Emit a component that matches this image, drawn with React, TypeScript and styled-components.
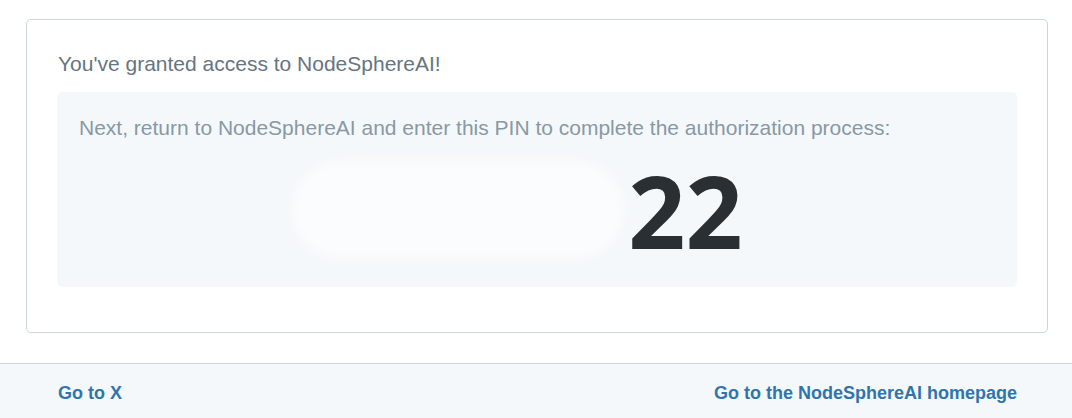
import React, { FC } from 'react'
import styled, { createGlobalStyle } from 'styled-components'

const GlobalStyle = createGlobalStyle`
  html, body {
    margin: 0;
    padding: 0;
    background: #ffffff;
    font-family: "Liberation Sans", Arial, sans-serif;
  }
`;

const Page = styled.div`
  display: flex;
  flex-direction: column;
  min-height: 418px;
`;

const Card = styled.div`
  margin: 19px 24px 30px 26px;
  padding: 30px 30px 45px 30px;
  border: 1px solid #ccd6dd;
  border-radius: 5px;
  background: #ffffff;
`;

const Heading = styled.h2`
  margin: 0 0 14px 1px;
  font-size: 21px;
  line-height: 28px;
  font-weight: normal;
  color: #66757f;
`;

const PinBox = styled.div`
  background: #f5f8fa;
  border-radius: 5px;
  padding: 22px 22px 27px 22px;
`;

const Instructions = styled.p`
  margin: 0 0 18px 0;
  font-size: 21px;
  line-height: 28px;
  color: #8899a6;
`;

const Pin = styled.div`
  display: flex;
  justify-content: center;
  align-items: center;
  padding-right: 38px;
  font-family: "Open Sans", "DejaVu Sans", sans-serif;
  font-weight: 700;
  font-size: 100px;
  line-height: 100px;
  color: #292f33;
`;

const Hidden = styled.span`
  width: 330px;
  height: 96px;
  margin: 0 5px 0 0;
  border-radius: 48px;
  background: rgba(255, 255, 255, 0.6);
  filter: blur(6px);
`;

const Footer = styled.div`
  flex: 1;
  display: flex;
  justify-content: space-between;
  align-items: flex-start;
  border-top: 1px solid #ccd6dd;
  background: #f5f8fa;
  padding: 18px 55px 14px 58px;
`;

const Link = styled.a`
  font-size: 18px;
  line-height: 22px;
  font-weight: bold;
  color: #2f75ac;
  text-decoration: none;
`;

const App: FC = () => {
    return (
        <>
            <GlobalStyle />
            <Page>
                <Card>
                    <Heading>You've granted access to NodeSphereAI!</Heading>
                    <PinBox>
                        <Instructions>
                            Next, return to NodeSphereAI and enter this PIN to complete the authorization process:
                        </Instructions>
                        <Pin>
                            <Hidden />
                            <span>22</span>
                        </Pin>
                    </PinBox>
                </Card>
                <Footer>
                    <Link href="#">Go to X</Link>
                    <Link href="#">Go to the NodeSphereAI homepage</Link>
                </Footer>
            </Page>
        </>
    )
}

export default App
